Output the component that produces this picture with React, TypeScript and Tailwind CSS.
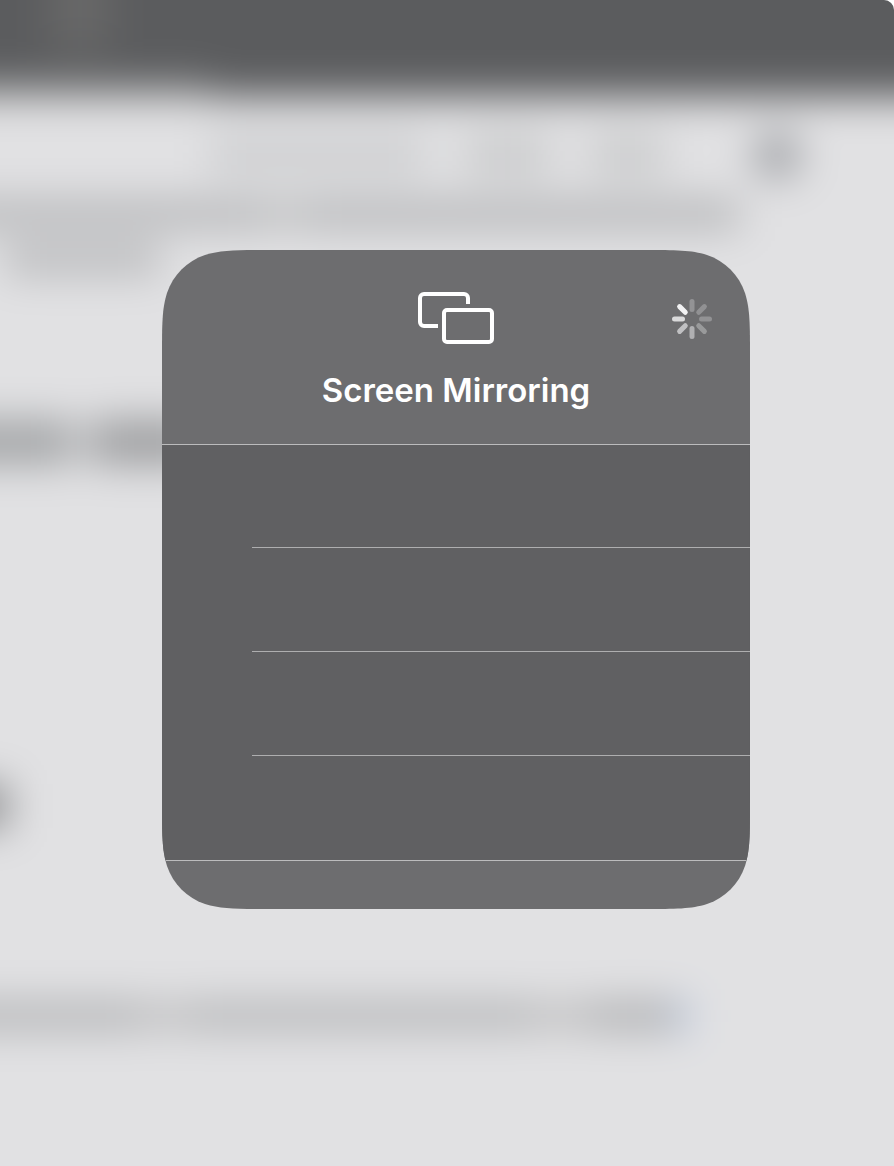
const spokes = [
  { angle: 0, color: "#939395" },
  { angle: 45, color: "#919193" },
  { angle: 90, color: "#929294" },
  { angle: 135, color: "#999a9b" },
  { angle: 180, color: "#b0b0b2" },
  { angle: 225, color: "#c0c0c2" },
  { angle: 270, color: "#dadadb" },
  { angle: 315, color: "#f2f2f3" },
];

const rows = ["row-1", "row-2", "row-3", "row-4"];

function MirroringIcon() {
  return (
    <svg width="76" height="52" viewBox="0 0 76 52" fill="none" stroke="white" strokeWidth="4" aria-hidden="true">
      <path d="M50 12V6a4 4 0 0 0-4-4H6a4 4 0 0 0-4 4v24a4 4 0 0 0 4 4h14" />
      <rect x="26" y="18" width="48" height="32" rx="3" />
    </svg>
  );
}

function Spinner() {
  return (
    <svg width="40" height="40" viewBox="-20 -20 40 40" strokeWidth="5" strokeLinecap="round" role="status" aria-label="Searching">
      {spokes.map((spoke) => (
        <line key={spoke.angle} x1="0" y1="-17.5" x2="0" y2="-9.5" stroke={spoke.color} transform={`rotate(${spoke.angle})`} />
      ))}
    </svg>
  );
}

// Continuous corners, scaled to the box of the panel
function PanelShape() {
  return (
    <svg width="0" height="0" className="absolute" aria-hidden="true">
      <clipPath id="panel-shape" clipPathUnits="objectBoundingBox">
        <path
          transform="scale(0.00170068 0.00151745)"
          d="M0 106C0 74 0 59 5 43C11 25 25 11 43 5C59 0 74 0 106 0H482C514 0 529 0 545 5C563 11 577 25 583 43C588 59 588 74 588 106V553C588 585 588 600 583 616C577 634 563 648 545 654C529 659 514 659 482 659H106C74 659 59 659 43 654C25 648 11 634 5 616C0 600 0 585 0 553Z"
        />
      </clipPath>
    </svg>
  );
}

// Out-of-focus page behind the panel
function Backdrop() {
  return (
    <div className="absolute inset-0 overflow-hidden rounded-tr-[10px] bg-[#e0e0e2]" aria-hidden="true">
      <div className="absolute -inset-20 bg-[#e1e1e3] blur-[20px]">
        <div className="flex h-[177px] flex-col justify-between bg-[#5b5c5e]">
          <div className="ml-[130px] h-[130px] w-[60px] bg-[#686868]" />
          <div className="h-4 w-[290px] bg-[#88898a]" />
        </div>
        <div className="flex h-[103px] items-center pt-3 pl-[290px]">
          <div className="h-10 w-[215px] bg-[#cecfd1]" />
          <div className="ml-10 h-10 w-[85px] bg-[#cacbcc]" />
          <div className="ml-10 h-10 w-[75px] bg-[#cacbcc]" />
          <div className="ml-[88px] size-12 rounded-full bg-[#a0a2a6]" />
        </div>
        <div className="flex h-7">
          <div className="w-[340px] bg-[#b4b5b7]" />
          <div className="w-[50px] bg-[#bebfc0]" />
          <div className="w-[430px] bg-[#b4b5b7]" />
        </div>
        <div className="mt-[18px] ml-[85px] h-7 w-[155px] bg-[#b6b7b9]" />
        <div className="mt-[146px] flex h-11 gap-4">
          <div className="w-[154px] bg-[#a2a4a6]" />
          <div className="w-[110px] bg-[#9c9d9f]" />
        </div>
        <div className="mt-[320px] h-11 w-[88px] bg-[#8c8d8f]" />
        <div className="mt-[174px] flex h-7">
          <div className="w-[220px] bg-[#b2b3b5]" />
          <div className="w-[50px] bg-[#c0c0c1]" />
          <div className="w-[340px] bg-[#b4b5b7]" />
          <div className="w-[60px] bg-[#c0c0c1]" />
          <div className="w-[86px] bg-[#adaeb0]" />
          <div className="w-3 bg-[#a8c0e8]" />
        </div>
      </div>
    </div>
  );
}

export default function App() {
  return (
    <main className="relative flex min-h-screen items-center justify-center bg-white pb-[7px] pl-[18px] font-['Inter',sans-serif]">
      <Backdrop />
      <PanelShape />
      <section className="relative w-full max-w-[588px] bg-[#6d6d6f] [clip-path:url(#panel-shape)]" aria-labelledby="panel-title">
        <header className="grid h-[194px] grid-cols-[1fr_auto_1fr] pt-[42px]">
          <div className="col-start-2 flex flex-col items-center gap-[26px]">
            <MirroringIcon />
            <h1 id="panel-title" className="text-[33px] leading-10 font-semibold whitespace-nowrap text-white">
              Screen Mirroring
            </h1>
          </div>
          <div className="mt-[7px] mr-[38px] justify-self-end">
            <Spinner />
          </div>
        </header>
        <ul className="border-y border-[#bcbcbd] bg-[#606062]">
          {rows.map((row) => (
            <li key={row} className="h-[104px] pl-[90px] first:h-[103px]">
              <div className={`h-full ${row === "row-4" ? "" : "border-b border-[#aeaeaf]"}`} />
            </li>
          ))}
        </ul>
        <div className="h-12" />
      </section>
    </main>
  );
}
